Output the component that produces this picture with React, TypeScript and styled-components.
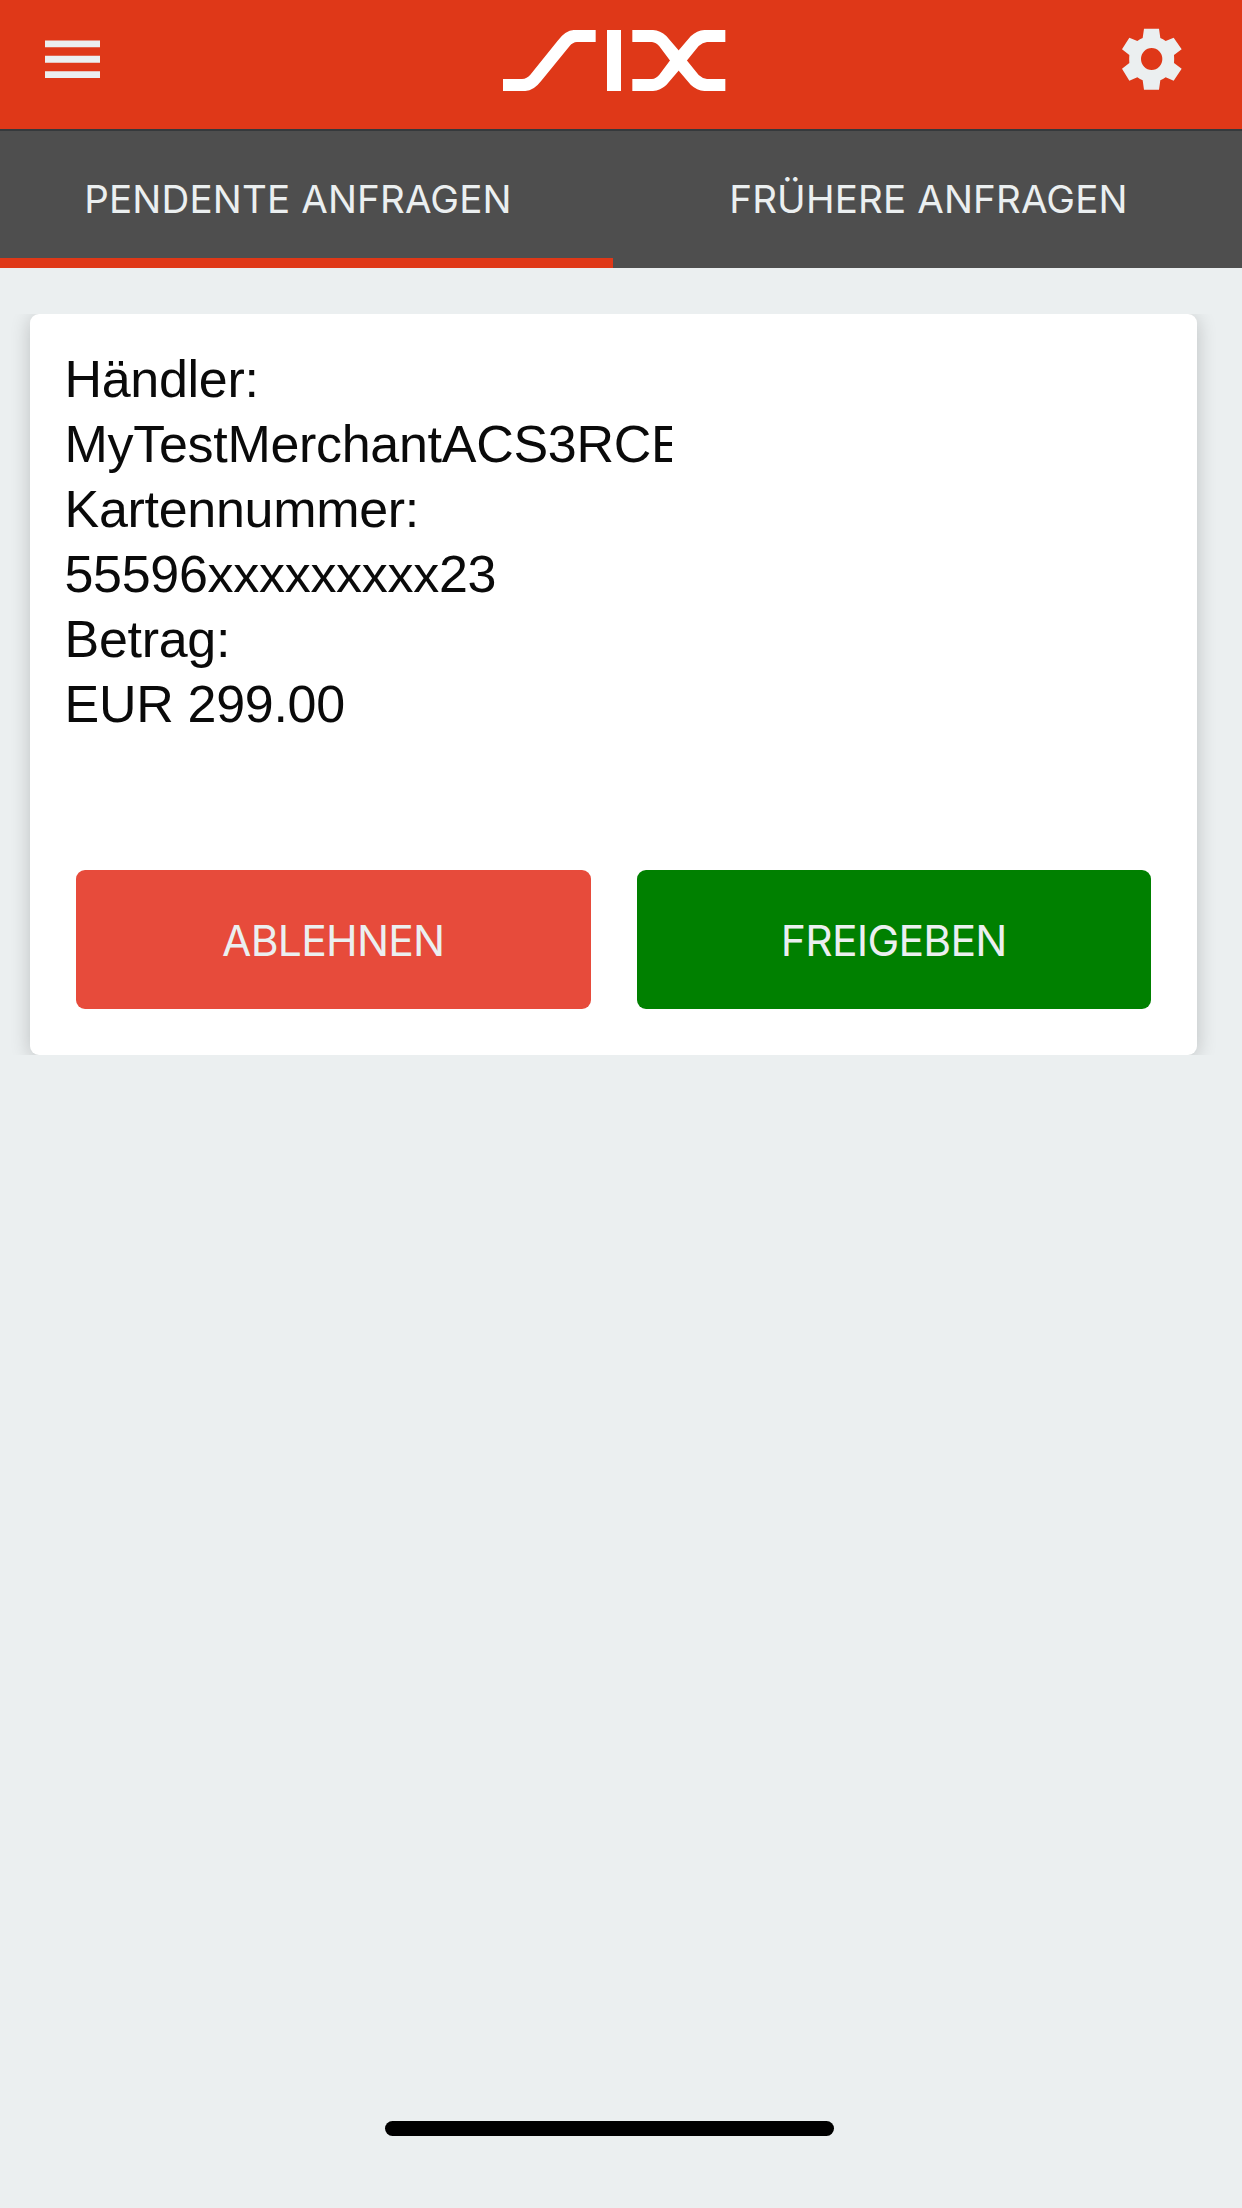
import React from 'react';
import styled, { createGlobalStyle } from 'styled-components';

const GlobalStyle = createGlobalStyle`
  * { box-sizing: border-box; }
  body { margin: 0; background: #ebeff0; }
`;

const Screen = styled.div`
  display: flex;
  flex-direction: column;
  width: 1242px;
  height: 2208px;
  background: #ebeff0;
  overflow: hidden;
  font-family: Inter, Roboto, sans-serif;
`;

const Header = styled.header`
  display: grid;
  grid-template-columns: 1fr auto 1fr;
  align-items: center;
  flex: none;
  height: 131px;
  padding: 0 60px 11px 45px;
  background: #df3818;
  border-bottom: 2px solid #35393c;
`;

const IconButton = styled.button<{ $end?: boolean }>`
  display: flex;
  justify-self: ${(p) => (p.$end ? 'end' : 'start')};
  padding: 0;
  border: 0;
  background: none;
  color: #ebeff0;
`;

const Logo = styled.svg`
  margin: 2px 0 0 1px;
`;

const Tabs = styled.nav`
  display: grid;
  grid-template-columns: 613px 1fr;
  flex: none;
  height: 137px;
  background: #4e4e4e;
`;

const Tab = styled.button<{ $active?: boolean }>`
  display: flex;
  align-items: center;
  justify-content: center;
  padding: ${(p) => (p.$active ? '8px 17px 0 0' : '0 0 2px 2px')};
  border: 0;
  border-bottom: ${(p) => (p.$active ? '10px solid #df3818' : '0')};
  background: none;
  color: #ebeff0;
  font: 400 38.5px Inter, Roboto, sans-serif;
  letter-spacing: 0.16px;
`;

const Content = styled.main`
  flex: 1;
  padding-top: 46px;
`;

/* Clips the card's shadow above and below, leaving it at the sides. */
const CardSlot = styled.section`
  padding: 0 45px 0 30px;
  overflow: hidden;
`;

const Card = styled.article`
  display: flex;
  flex-direction: column;
  justify-content: space-between;
  height: 741px;
  padding: 33px 46px 46px;
  border-radius: 9px;
  background: #fff;
  box-shadow: 0 3px 20px rgba(0, 0, 0, 0.2);
`;

const Details = styled.dl`
  width: 607px;
  margin: 0 0 0 -11.5px;
  overflow: hidden;
  color: #0a0a0a;
  font: 400 52px/64.9px 'Liberation Sans', Arial, sans-serif;
  letter-spacing: -0.3px;
  white-space: nowrap;
`;

const Label = styled.dt``;

const Value = styled.dd`
  margin: 0;
`;

const Actions = styled.div`
  display: grid;
  grid-template-columns: 1fr 1fr;
  gap: 46px;
`;

const ActionButton = styled.button<{ $color: string }>`
  height: 139px;
  padding: 2px 0 0;
  border: 0;
  border-radius: 9px;
  background: ${(p) => p.$color};
  color: #ebeff0;
  font: 400 42.6px Inter, Roboto, sans-serif;
  letter-spacing: -0.75px;
`;

const Footer = styled.footer`
  display: flex;
  justify-content: center;
  padding: 0 23px 72px 0;
`;

const HomeIndicator = styled.div`
  width: 449px;
  height: 15px;
  border-radius: 8px;
  background: #000;
`;

const MenuIcon = () => (
  <svg width="55" height="38" viewBox="0 0 55 38" fill="currentColor">
    <path d="M0 .5h55v6.800H0zM0 15.800h55v7H0zM0 31.300h55v6.700H0z" />
  </svg>
);

const SixLogo = () => (
  <Logo width="223" height="61" viewBox="68 90 669 183" fill="#fff">
    <path d="M68 237H125Q140 236 150 224L232 122Q256 91 280 90H346V126H290Q277 127 268 138L183 242Q160 272 135 273H68Z" />
    <path d="M380 90H422V273H380Z" />
    <path d="M456 90H518Q540 91 558 108L594 150L621 183L655 225Q667 236 680 237H735V273H672Q650 272 631 254L594 211L570 183L537 139Q527 127 515 126H456Z" />
    <path d="M456 273H518Q540 272 558 255L594 213L621 180L655 138Q667 127 680 126H735V90H672Q650 91 631 109L594 152L570 180L537 224Q527 236 515 237H456Z" />
  </Logo>
);

const GearIcon = () => (
  <svg width="60" height="62" viewBox="0 0 180 186" fill="currentColor" fillRule="evenodd">
    <path d="M66 2H111L115 30Q123 33 131 39L155 29L179 64L156 81Q157 93 156 105L179 122L155 158L131 148Q123 154 115 157L111 185H66L62 157Q54 154 46 148L22 158L0 122L22 105Q21 93 22 81L0 64L22 29L46 39Q54 33 62 30ZM89 60A32 33 0 1 0 89 126A32 33 0 1 0 89 60Z" />
  </svg>
);

export default function App() {
  return (
    <>
      <GlobalStyle />
      <Screen>
        <Header>
          <IconButton aria-label="Menü">
            <MenuIcon />
          </IconButton>
          <SixLogo />
          <IconButton $end aria-label="Einstellungen">
            <GearIcon />
          </IconButton>
        </Header>
        <Tabs>
          <Tab $active>PENDENTE ANFRAGEN</Tab>
          <Tab>FRÜHERE ANFRAGEN</Tab>
        </Tabs>
        <Content>
          <CardSlot>
            <Card>
              <Details>
                <Label>Händler:</Label>
                <Value>MyTestMerchantACS3RCE</Value>
                <Label>Kartennummer:</Label>
                <Value>55596xxxxxxxxx23</Value>
                <Label>Betrag:</Label>
                <Value>EUR 299.00</Value>
              </Details>
              <Actions>
                <ActionButton $color="#e74b3b">ABLEHNEN</ActionButton>
                <ActionButton $color="#008000">FREIGEBEN</ActionButton>
              </Actions>
            </Card>
          </CardSlot>
        </Content>
        <Footer>
          <HomeIndicator />
        </Footer>
      </Screen>
    </>
  );
}
